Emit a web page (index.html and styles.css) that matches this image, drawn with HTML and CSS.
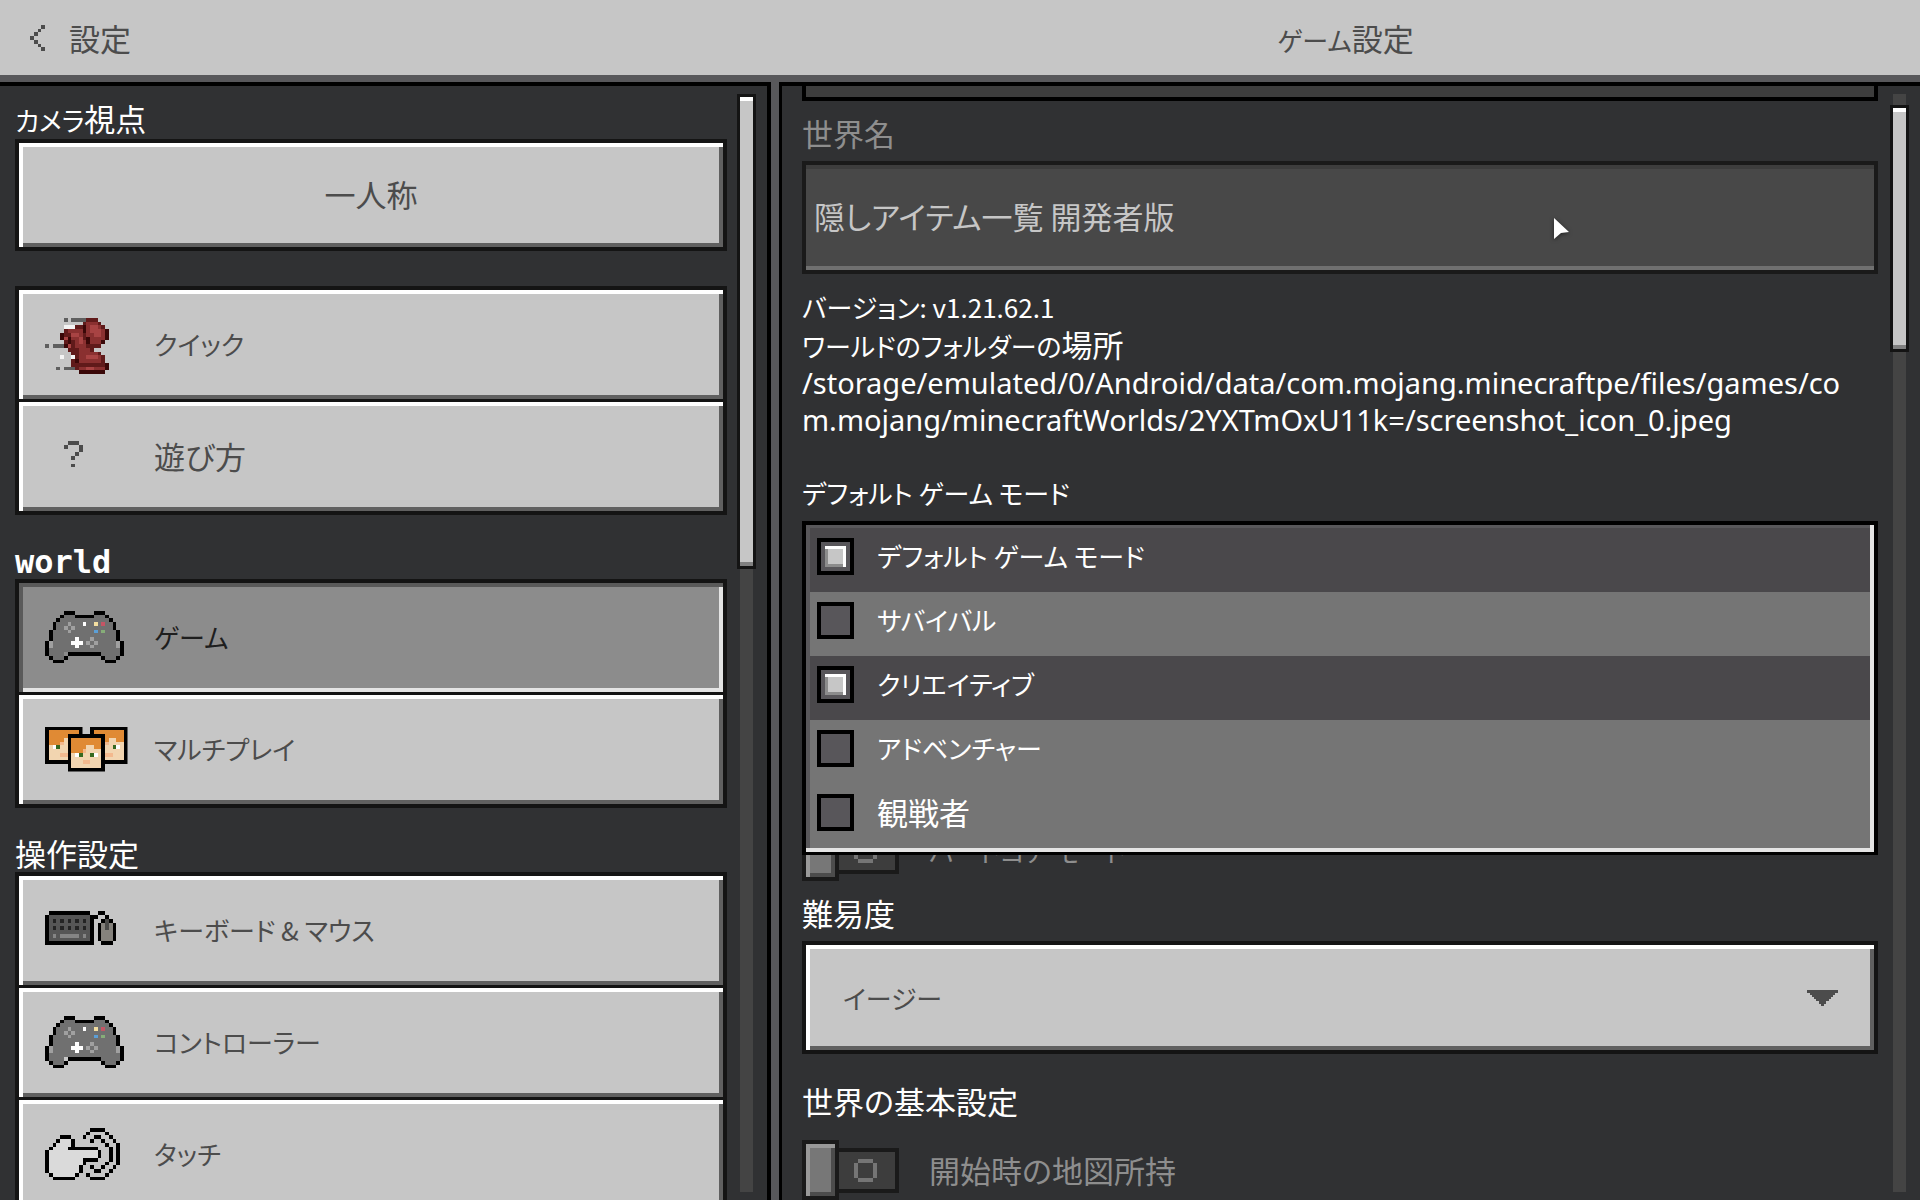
FILE: index.html
```html
<!DOCTYPE html>
<html lang="ja">
<head>
<meta charset="utf-8">
<meta name="viewport" content="width=device-width, initial-scale=1">
<title>ゲーム設定</title>
<link rel="stylesheet" href="styles.css">
</head>
<body>
<svg class="defs" aria-hidden="true">
  <symbol id="gamepad" viewBox="0 -1 24 16">
    <path fill="#707070" d="M5 1h11v1h1v1h1v2h1v3h1v4h-1v1h-4v-2H5v2H2v-1H1V8h1V5h1V3h1V2h1z"/>
    <path fill="#000" d="M5 0h3v1H5zM13 0h3v1h-3zM4 1h1v1H4zM8 1h5v1H8zM16 1h1v1h-1zM3 2h1v1H3zM17 2h1v1h-1zM2 3h1v2H2zM18 3h1v2h-1zM1 5h1v3H1zM19 5h1v3h-1zM0 8h1v4H0zM20 8h1v4h-1zM6 11h9v1H6zM1 12h1v1H1zM5 12h1v1H5zM15 12h1v1h-1zM19 12h1v1h-1zM2 13h3v1H2zM16 13h3v1h-3z"/>
    <path fill="#a0a0a0" d="M6 3h1v1H6zM5 4h1v1H5zM7 4h1v1H7zM6 5h1v1H6zM12 7h1v1h-1zM11 8h1v1h-1zM13 8h1v1h-1zM12 9h1v1h-1zM1 8h1v2H1zM19 8h1v2h-1z"/>
    <path fill="#fff" d="M10 3h1v1h-1zM8 7h1v1h1v1H9v1H8V9H7V8h1z"/>
    <path fill="#f3dea0" d="M13 3h1v1h-1z"/><path fill="#c45565" d="M15 3h1v1h-1z"/>
    <path fill="#5c9fd6" d="M13 5h1v1h-1z"/><path fill="#86ad78" d="M15 5h1v1h-1z"/>
  </symbol>
  <symbol id="face" viewBox="0 0 10 10">
    <path fill="#000" d="M0 0h10v10H0z"/>
    <path fill="#f2d5b0" d="M1 1h8v8H1z"/>
    <path fill="#e08a34" d="M1 1h8v3H7V3H5v1H4v1H1z"/>
    <path fill="#f3b98e" d="M4 4h1v1H4zM4 7h2v1H4z"/>
    <path fill="#fff" d="M2 5h1v1H2zM7 5h1v1H7z"/>
    <path fill="#376a21" d="M3 5h1v1H3zM6 5h1v1H6z"/>
  </symbol>
</svg>

<header class="topbar">
  <button class="back" type="button">
    <svg class="chevron" viewBox="0 0 4 7" aria-hidden="true"><path fill="#4c4c4c" d="M3 0h1v1H3zM2 1h1v1H2zM1 2h1v1H1zM0 3h1v1H0zM1 4h1v1H1zM2 5h1v1H2zM3 6h1v1H3z"/></svg>
    <span>設定</span>
  </button>
  <h1 class="title"><span class="kana">ゲーム</span>設定</h1>
</header>

<div class="panels">
  <nav class="panel side">
    <div class="side-body">
      <h2 class="group-name"><span class="kana">カメラ</span>視点</h2>
      <div class="stack stack-single"><button class="item item-center" type="button">一人称</button></div>

      <div class="stack">
        <button class="item" type="button">
          <svg class="icon" viewBox="0 -1 24 16" aria-hidden="true">
            <path fill="#601a1a" d="M10 0h4v1h1v1h1v1h1v3h-1v1h-1v1h-2v1h2v1h1v2h1v2h-1v1H9v-1H8v-1H7v-2h1v-1H7V9H6V8H5V6H4V4h1V3h3V2h2z"/>
            <path fill="#8a3030" d="M6 3h4v1H6zM7 4h3v2H7zM8 6h3v2H8zM9 8h3v1H9zM9 9h5v1H9zM9 10h6v2H9zM9 13h7v1H9zM11 1h3v1h1v1h1v3h-1v1h-3V5h-1z"/>
            <path fill="#a84343" d="M12 2h2v1h1v2h-2V4h-1zM7 4h2v1H7zM9 5h1v2H9zM11 10h3v1h-3zM11 13h2v1h-2zM5 5h1v1H5zM6 7h1v1H6z"/>
            <path fill="#3a0808" d="M4 4h1v2H4zM6 5h1v2H6zM5 7h1v1H5zM10 2h1v2h-1zM11 5h1v2h-1zM16 3h1v3h-1zM15 6h1v1h-1zM8 11h1v1H8zM9 14h7v1H9zM16 12h1v2h-1z"/>
            <path fill="#5f5f5f" d="M5 0h1v1H5zM7 0h4v1H7zM0 7h1v1H0zM2 7h3v1H2zM3 13h1v1H3zM5 13h3v1H5z"/>
            <path fill="#f4f4f4" d="M5 2h3v1H5zM4 10h1v1H4zM7 10h1v1H7z"/>
          </svg>
          <span class="kana">クイック</span>
        </button>
        <button class="item" type="button">
          <svg class="icon" viewBox="0 0 24 16" aria-hidden="true"><path fill="#4c4c4c" d="M6 4h3v1H6zM5 5h1v1H5zM9 5h1v2H9zM8 7h1v1H8zM7 8h1v1H7zM7 10h1v1H7z"/></svg>
          <span>遊び方</span>
        </button>
      </div>

      <h2 class="group-name pixel">world</h2>
      <div class="stack">
        <button class="item is-selected" type="button" aria-current="page">
          <svg class="icon" aria-hidden="true"><use href="#gamepad"/></svg>
          <span class="kana">ゲーム</span>
        </button>
        <button class="item" type="button">
          <svg class="icon" viewBox="0 -1 24 16" aria-hidden="true">
            <use href="#face" x="0" y="1" width="10" height="10"/>
            <use href="#face" x="12" y="1" width="10" height="10"/>
            <use href="#face" x="6" y="3" width="10" height="10"/>
          </svg>
          <span class="kana">マルチプレイ</span>
        </button>
      </div>

      <h2 class="group-name">操作設定</h2>
      <div class="stack">
        <button class="item" type="button">
          <svg class="icon" viewBox="0 0 24 16" aria-hidden="true">
            <path fill="#000" d="M1 3h11v1h1V4h1V3h2v1h1v1h1v1h1v5h-1v1h-3v-1h-1V6h1V5h1V4h-2v1h-1v7H0V4h1z"/>
            <path fill="#565656" d="M1 4h11v7H1z"/>
            <path fill="#242424" d="M2 5h1v1H2zM4 5h1v1H4zM6 5h1v1H6zM8 5h1v1H8zM10 5h1v1h-1zM2 7h1v1H2zM4 7h1v1H4zM6 7h1v1H6zM8 7h1v1H8zM10 7h1v1h-1z"/>
            <path fill="#858585" d="M2 9h1v1H2zM4 9h5v1H4zM10 9h1v1h-1z"/>
            <path fill="#85827c" d="M15 6h3v5h-3z"/><path fill="#4a4a48" d="M16 5h1v3h-1z"/>
          </svg>
          <span class="kana">キーボード &amp; マウス</span>
        </button>
        <button class="item" type="button">
          <svg class="icon" aria-hidden="true"><use href="#gamepad"/></svg>
          <span class="kana">コントローラー</span>
        </button>
        <button class="item" type="button">
          <svg class="icon" viewBox="0 -1 24 16" aria-hidden="true">
            <path fill="#dadada" d="M4 3h3v3h7v2h-4v2H9v2H8v1H2v-1H1V5h1V4h2z"/>
            <path fill="#000" d="M4 2h3v1H4zM3 3h1v1H3zM7 3h1v2H7zM2 4h1v1H2zM6 5h8v1H6zM1 5h1v1H1zM0 6h1v6H0zM14 6h1v2h-1zM10 8h4v1h-4zM10 9h1v1h-1zM9 10h1v2H9zM1 12h1v1H1zM8 12h1v1H8zM2 13h6v1H2z"/>
            <path fill="#000" d="M12 0h4v1h-4zM11 1h1v1h-1zM16 1h1v1h-1zM10 2h1v1h-1zM17 2h1v1h-1zM18 3h1v1h-1zM19 4h1v6h-1zM18 10h1v1h-1zM17 11h1v1h-1zM16 12h1v1h-1zM11 12h1v1h-1zM12 13h4v1h-4zM13 2h2v1h-2zM12 3h1v1h-1zM15 3h1v1h-1zM16 4h1v1h-1zM17 5h1v4h-1zM16 9h1v1h-1zM15 10h1v1h-1zM13 11h2v1h-2zM12 10h1v1h-1z"/>
          </svg>
          <span class="kana">タッチ</span>
        </button>
      </div>
    </div>
    <div class="scroll"><div class="thumb thumb-side"></div></div>
  </nav>

  <main class="panel main">
    <div class="main-body">
      <div class="preview-edge"></div>
      <label class="field-name muted" for="world-name">世界名</label>
      <input class="text-box" id="world-name" type="text" value="隠しアイテム一覧 開発者版" readonly>
      <div class="info">
        <p class="kana">バージョン: v1.21.62.1</p>
        <p><span class="kana">ワールドのフォルダーの</span>場所</p>
        <p class="path">/storage/emulated/0/Android/data/com.mojang.minecraftpe/files/games/com.mojang/minecraftWorlds/2YXTmOxU11k=/screenshot_icon_0.jpeg</p>
      </div>

      <div class="field-name kana" id="mode-name">デフォルト ゲーム モード</div>
      <div class="mode">
        <div class="menu" role="group" aria-labelledby="mode-name">
          <label class="option"><input type="checkbox" class="tick" checked><span class="kana">デフォルト ゲーム モード</span></label>
          <label class="option"><input type="checkbox" class="tick"><span class="kana">サバイバル</span></label>
          <label class="option"><input type="checkbox" class="tick" checked><span class="kana">クリエイティブ</span></label>
          <label class="option"><input type="checkbox" class="tick"><span class="kana">アドベンチャー</span></label>
          <label class="option"><input type="checkbox" class="tick"><span>観戦者</span></label>
        </div>
      </div>
      <label class="toggle muted"><input type="checkbox" role="switch" class="switch" disabled><span class="kana">ハードコア モード</span></label>

      <label class="field-name" for="difficulty">難易度</label>
      <div class="select-wrap">
        <select class="select kana" id="difficulty"><option>イージー</option></select>
        <svg class="arrow" viewBox="0 0 32 16" aria-hidden="true"><path fill="#4c4c4c" d="M0 0h31v3h-3v2h-2v2h-2v2h-2v2h-3v3h-2v2h-3v-2h-2v-3H9V9H7V7H5V5H3V3H0z"/></svg>
      </div>

      <h2 class="field-name section">世界の基本設定</h2>
      <label class="toggle muted"><input type="checkbox" role="switch" class="switch" disabled><span>開始時の地図所持</span></label>
    </div>
    <div class="scroll"><div class="thumb thumb-main"></div></div>
    <svg class="pointer" viewBox="0 0 16 21" aria-hidden="true"><path fill="#fff" d="M0 0l15 14-8 1-7 6z"/></svg>
  </main>
</div>
</body>
</html>
```
FILE: styles.css
```css
*, *::before, *::after { box-sizing: border-box; }

body {
  margin: 0;
  height: 100vh;
  display: flex;
  flex-direction: column;
  overflow: hidden;
  background: #58585b;
  color: #fff;
  font-family: "Noto Sans CJK JP", "Noto Sans", sans-serif;
  font-size: 31px;
  line-height: 36px;
  font-feature-settings: "palt";
}

button, input, select {
  margin: 0;
  padding: 0;
  border: 0;
  border-radius: 0;
  color: inherit;
  font: inherit;
  font-feature-settings: inherit;
}

h1, h2, p { margin: 0; font-size: inherit; font-weight: 400; }

svg { display: block; shape-rendering: crispEdges; }

.defs { position: absolute; width: 0; height: 0; }
.kana { font-size: 26px; }
span.kana { line-height: 28px; }
.muted { color: #8e8e8e; }

/* Top bar */
.topbar {
  flex: none;
  display: grid;
  grid-template-columns: 771fr 1141fr;
  gap: 8px;
  align-items: center;
  height: 75px;
  margin-bottom: 7px;
  background: #c6c6c6;
  color: #4c4c4c;
}
.back {
  display: flex;
  align-items: center;
  gap: 24px;
  padding-left: 30px;
  background: none;
}
.chevron { width: 15px; height: 26px; }
.title { padding-right: 8px; text-align: center; }

/* Two panels */
.panels {
  flex: 1;
  min-height: 0;
  display: grid;
  grid-template-columns: 771fr 1141fr;
  gap: 8px;
}
.panel {
  position: relative;
  display: flex;
  min-width: 0;
  overflow: hidden;
  border-top: 4px solid #000;
  background: #303133;
}
.side { border-right: 4px solid #000; }
.main { border-left: 3px solid #000; }

/* Scroll bars */
.scroll {
  flex: none;
  width: 13px;
  margin: 8px 14px 8px 0;
  background: #444;
}
.thumb {
  margin: 0 -3px;
  border: 3px solid #141414;
  background: #c6c6c6;
  box-shadow: inset 0 4px #fff, inset 0 -4px #808080;
}
.thumb-side { height: 475px; }
.thumb-main { height: 247px; margin-top: 11px; }

/* Category list */
.side-body { flex: 1; min-width: 0; padding: 14px 13px 0 15px; }
.group-name { height: 37px; line-height: 36px; }
.pixel { font: 700 32px/40px "DejaVu Sans Mono", monospace; }
.stack {
  display: flex;
  flex-direction: column;
  gap: 3px;
  margin-bottom: 27px;
  padding: 4px;
  background: #141414;
}
.stack-single { margin: 2px 0 35px; }
.item {
  display: flex;
  align-items: center;
  gap: 19px;
  height: 109px;
  padding: 0 0 2px 26px;
  background: #c6c6c6;
  color: #4c4c4c;
  box-shadow: inset 4px 0 #fff, inset 0 4px #fff, inset -4px -4px #606060;
}
.item-center { justify-content: center; height: 104px; padding: 0 0 2px; }
.item.is-selected {
  background: #8c8c8c;
  color: #1e1e1e;
  box-shadow: inset 4px 4px #5a5a5a, inset -4px -4px #e4e4e4;
}
.icon { flex: none; width: 90px; height: 60px; }

/* World settings */
.main-body { flex: 1; min-width: 0; padding: 0 15px 0 20px; }
.preview-edge {
  height: 15px;
  border: solid #000;
  border-width: 0 4px 4px;
  background: #3d3d3d;
}
.field-name { display: block; height: 40px; line-height: 36px; }
.preview-edge + .field-name { margin-top: 14px; }
.text-box {
  display: block;
  width: 100%;
  height: 113px;
  margin-top: 6px;
  padding: 0 9px 4px 8px;
  border: 4px solid #1a1a1a;
  background: #484848;
  color: #c6c6c6;
  box-shadow: inset 0 4px #3d3d3d, inset 0 -4px #707070;
}
.info { margin: 15px 0 36px; line-height: 36px; }
.info p { height: 37px; }
.info .path {
  height: auto;
  margin-top: 1px;
  padding: 0 20px 1px 0;
  font-family: "Noto Sans", sans-serif;
  font-size: 29px;
  line-height: 37px;
  word-break: break-all;
}

/* Game mode menu, open over the rows below it */
.mode { position: relative; height: 113px; margin: 6px 0 187px; }
.menu {
  position: absolute;
  top: 0;
  left: 0;
  right: 0;
  z-index: 1;
  padding: 3px 4px 4px;
  border: 4px solid #000;
  border-bottom-width: 3px;
  background: #58575a;
  box-shadow: inset -4px -4px #e4e4e4;
}
.option {
  display: flex;
  align-items: center;
  gap: 23px;
  height: 64px;
  padding: 0 7px 8px;
  background: #757575;
}
.option:has(:checked) { background: #4a484b; }
.tick {
  appearance: none;
  flex: none;
  width: 37px;
  height: 37px;
  border: 4px solid #000;
  background: #58565a;
}
.tick:checked {
  background: #c6c6c6;
  box-shadow: inset 0 0 0 4px #58565a, inset -7px 7px #fff, inset 7px -7px #8c8c8c;
}

/* Switches */
.toggle { display: flex; align-items: center; gap: 30px; height: 60px; line-height: 34px; }
.switch {
  appearance: none;
  display: flex;
  align-items: center;
  flex: none;
  width: 97px;
  height: 60px;
}
.switch::before {
  content: "";
  width: 37px;
  height: 60px;
  border: 4px solid #1a1a1a;
  background: #777;
  box-shadow: inset 4px 4px #999, inset -4px -4px #4c4c4c;
}
.switch::after {
  content: "";
  flex: 1;
  height: 45px;
  border: 4px solid #1a1a1a;
  border-left: 0;
  background:
    linear-gradient(#3d3d3d, #3d3d3d) 19px center / 15px 15px no-repeat,
    linear-gradient(#757575, #757575) 15px center / 23px 15px no-repeat,
    linear-gradient(#757575, #757575) 19px center / 15px 23px no-repeat,
    #3d3d3d;
}
.toggle + .field-name { margin-top: 14px; }

/* Difficulty */
.select-wrap { display: grid; align-items: center; margin: 6px 0 29px; }
.select {
  grid-area: 1 / 1;
  appearance: none;
  width: 100%;
  height: 113px;
  padding-left: 37px;
  border: 4px solid #141414;
  background: #c6c6c6;
  color: #4c4c4c;
  box-shadow: inset 4px 0 #fff, inset 0 4px #fff, inset -4px -4px #606060;
}
.arrow {
  grid-area: 1 / 1;
  justify-self: end;
  width: 32px;
  height: 16px;
  margin-right: 39px;
  pointer-events: none;
}
.section { margin-bottom: 17px; }

.pointer {
  position: absolute;
  top: 132px;
  right: 350px;
  width: 16px;
  height: 21px;
  filter: drop-shadow(0 1px 2px #0008);
  shape-rendering: auto;
}
```
